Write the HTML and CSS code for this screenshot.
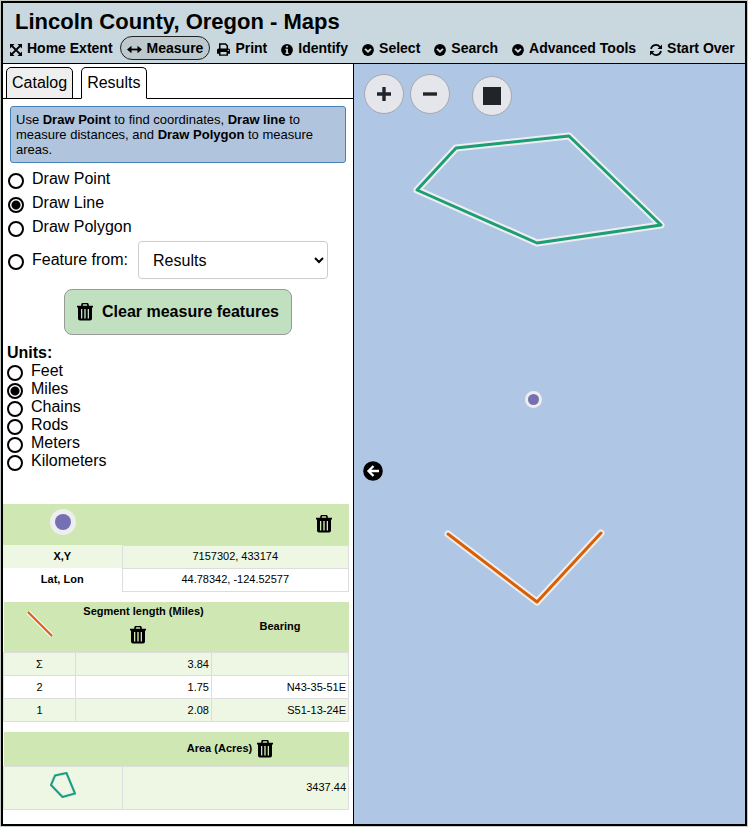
FILE: index.html
```html
<!DOCTYPE html>
<html lang="en">
<head>
<meta charset="utf-8">
<title>Lincoln County, Oregon - Maps</title>
<link rel="stylesheet" href="styles.css">
</head>
<body>
<svg class="sprite" aria-hidden="true">
  <symbol id="trash" viewBox="0 0 16 18">
    <path d="M5 3V2a1.5 1.5 0 0 1 1.5-1.5h3A1.5 1.5 0 0 1 11 2v1" fill="none" stroke="currentColor" stroke-width="1.6"/>
    <path fill="currentColor" fill-rule="evenodd" d="M0 2.8h16v1.800h-1V15.500a2 2 0 0 1-2 2H3a2 2 0 0 1-2-2V4.600H0zM4 6v9.500h1.300V6zM7.300 6v9.500h1.400V6zM10.700 6v9.500H12V6z"/>
  </symbol>
  <symbol id="down" viewBox="0 0 13 13">
    <circle cx="6.500" cy="6.500" r="6.400" fill="currentColor"/>
    <path d="M3.300 5.200l3.200 3.200 3.200-3.200" fill="none" stroke="#c9d7de" stroke-width="2"/>
  </symbol>
</svg>
<div class="frame">
  <header class="header">
    <h1 class="title">Lincoln County, Oregon - Maps</h1>
    <nav class="menu">
      <button class="menu-item" type="button"><svg class="menu-icon" viewBox="0 0 13 13"><path d="M2 2l9 9M11 2l-9 9" stroke="currentColor" stroke-width="2.200"/><path fill="currentColor" d="M0 0h5L0 5zM13 0v5L8 0zM0 13V8l5 5zM13 13H8l5-5z"/></svg>Home Extent</button>
      <button class="menu-item active" type="button"><svg class="menu-icon wide" viewBox="0 0 15 13"><path d="M2 6.500h11" stroke="currentColor" stroke-width="1.800"/><path fill="currentColor" d="M0 6.500l4.500-3.700v7.400zM15 6.500l-4.500-3.700v7.400z"/></svg>Measure</button>
      <button class="menu-item" type="button"><svg class="menu-icon print" viewBox="0 0 13 13"><path d="M2.800 6.500V1h5.700l1.800 1.800v3.700" fill="none" stroke="currentColor" stroke-width="1.500"/><path fill="currentColor" fill-rule="evenodd" d="M1.500 5.600h10A1.500 1.500 0 0 1 13 7.100v3.700h-2v2H2v-2H0V7.100a1.500 1.500 0 0 1 1.500-1.500zM3.500 9v2.400h6V9zM10.600 6.800v1.200h1.200V6.800z"/></svg>Print</button>
      <button class="menu-item" type="button"><svg class="menu-icon" viewBox="0 0 13 13"><circle cx="6.500" cy="6.500" r="6.400" fill="currentColor"/><path d="M5.500 2h2v1.900h-2zM4.800 5.100h2.700v4.300h.8v1.300H4.800V9.400h.8v-3h-.8z" fill="#c9d7de"/></svg>Identify</button>
      <button class="menu-item" type="button"><svg class="menu-icon"><use href="#down"/></svg>Select</button>
      <button class="menu-item" type="button"><svg class="menu-icon"><use href="#down"/></svg>Search</button>
      <button class="menu-item" type="button"><svg class="menu-icon"><use href="#down"/></svg>Advanced Tools</button>
      <button class="menu-item" type="button"><svg class="menu-icon" viewBox="0 0 13 13"><path d="M1.100 5.400A5.400 5.400 0 0 1 10.700 3.200M11.900 7.600A5.400 5.400 0 0 1 2.300 9.800" fill="none" stroke="currentColor" stroke-width="1.800"/><path fill="currentColor" d="M13 .6v4.800H8.200zM0 12.400V7.600h4.800z"/></svg>Start Over</button>
    </nav>
  </header>
  <main class="main">
    <section class="panel">
      <div class="tabs" role="tablist">
        <button class="tab" type="button" role="tab" aria-selected="false">Catalog</button>
        <button class="tab selected" type="button" role="tab" aria-selected="true">Results</button>
      </div>
      <p class="hint">Use <b>Draw Point</b> to find coordinates, <b>Draw line</b> to measure distances, and <b>Draw Polygon</b> to measure areas.</p>
      <form class="measure">
        <div class="modes">
          <label class="choice"><input type="radio" name="mode">Draw Point</label>
          <label class="choice"><input type="radio" name="mode" checked>Draw Line</label>
          <label class="choice"><input type="radio" name="mode">Draw Polygon</label>
        </div>
        <div class="feature">
          <label class="choice"><input type="radio" name="mode">Feature from:</label>
          <select class="source" aria-label="Feature from"><option>Results</option></select>
        </div>
        <button class="clear" type="button"><svg class="trash"><use href="#trash"/></svg>Clear measure features</button>
        <fieldset class="units">
          <legend>Units:</legend>
          <label class="choice"><input type="radio" name="unit">Feet</label>
          <label class="choice"><input type="radio" name="unit" checked>Miles</label>
          <label class="choice"><input type="radio" name="unit">Chains</label>
          <label class="choice"><input type="radio" name="unit">Rods</label>
          <label class="choice"><input type="radio" name="unit">Meters</label>
          <label class="choice"><input type="radio" name="unit">Kilometers</label>
        </fieldset>
      </form>
      <div class="results">
        <table class="result point">
          <colgroup><col class="col-wide"><col></colgroup>
          <thead><tr>
            <th><svg class="swatch" viewBox="0 0 26 26"><circle cx="13" cy="13" r="13" fill="#eee"/><circle cx="13" cy="13" r="8" fill="#7570b3"/></svg></th>
            <th class="end"><button class="delete" type="button" aria-label="Delete point"><svg class="trash"><use href="#trash"/></svg></button></th>
          </tr></thead>
          <tbody>
            <tr><th>X,Y</th><td>7157302, 433174</td></tr>
            <tr><th>Lat, Lon</th><td>44.78342, -124.52577</td></tr>
          </tbody>
        </table>
        <table class="result line">
          <colgroup><col class="col-narrow"><col class="col-mid"><col></colgroup>
          <thead><tr>
            <th><svg class="swatch" viewBox="0 0 26 26"><path d="M1 1l24 24" stroke="#eee" stroke-width="5"/><path d="M1 1l24 24" stroke="#d95f02" stroke-width="2"/></svg></th>
            <th><div class="stack">Segment length (Miles)<button class="delete" type="button" aria-label="Delete line"><svg class="trash"><use href="#trash"/></svg></button></div></th>
            <th>Bearing</th>
          </tr></thead>
          <tbody>
            <tr><td>Σ</td><td class="num">3.84</td><td class="num"></td></tr>
            <tr><td>2</td><td class="num">1.75</td><td class="num">N43-35-51E</td></tr>
            <tr><td>1</td><td class="num">2.08</td><td class="num">S51-13-24E</td></tr>
          </tbody>
        </table>
        <table class="result area">
          <colgroup><col class="col-wide"><col></colgroup>
          <thead><tr>
            <th></th>
            <th><div class="inline">Area (Acres)<button class="delete" type="button" aria-label="Delete area"><svg class="trash"><use href="#trash"/></svg></button></div></th>
          </tr></thead>
          <tbody>
            <tr><td><svg class="swatch" viewBox="0 0 26 26"><path d="M5 3.500L16.500 1 25 21.500 12.500 25 1 13z" fill="none" stroke="#e4eeee" stroke-width="4"/><path d="M5 3.500L16.500 1 25 21.500 12.500 25 1 13z" fill="none" stroke="#1b9e77" stroke-width="2"/></svg></td><td class="num">3437.44</td></tr>
          </tbody>
        </table>
      </div>
    </section>
    <section class="map" aria-label="Map">
      <svg class="drawing" aria-hidden="true">
        <g fill="none" stroke-linejoin="round" stroke-linecap="round">
          <path d="M102 84L215 72 307 161 183 179 63 126z" stroke="#eee" stroke-width="7"/>
          <path d="M102 84L215 72 307 161 183 179 63 126z" stroke="#1b9e77" stroke-width="3"/>
          <path d="M94 470L183 538 247 469" stroke="#eee" stroke-width="7"/>
          <path d="M94 470L183 538 247 469" stroke="#d95f02" stroke-width="3"/>
        </g>
        <circle cx="179.500" cy="335.500" r="8.500" fill="#eee"/>
        <circle cx="179.500" cy="335.500" r="5.500" fill="#7570b3"/>
      </svg>
      <div class="controls">
        <button class="round" type="button" aria-label="Zoom in"><svg viewBox="0 0 14 14"><path d="M0 7h14M7 0v14" stroke="#212529" stroke-width="3.400"/></svg></button>
        <button class="round" type="button" aria-label="Zoom out"><svg viewBox="0 0 14 14"><path d="M0 7h14" stroke="#212529" stroke-width="3.400"/></svg></button>
        <button class="round extent" type="button" aria-label="Base map"><span class="square"></span></button>
      </div>
      <button class="collapse" type="button" aria-label="Hide panel"><svg viewBox="0 0 20 20"><circle cx="10" cy="10" r="9.800" fill="#000"/><path d="M16 10H6M10.500 5L5.500 10l5 5" fill="none" stroke="#fff" stroke-width="2.300"/></svg></button>
    </section>
  </main>
</div>
</body>
</html>
```
FILE: styles.css
```css
* { box-sizing: border-box; }

body {
  margin: 0;
  padding: 1px;
  background: #c4cbc6;
  color: #000;
  font-family: "Liberation Sans", Arial, sans-serif;
  font-size: 16px;
}

button, select, input { font: inherit; color: inherit; margin: 0; }
button { padding: 0; border: 0; background: none; cursor: pointer; }
svg { display: block; flex: none; }

.sprite { position: absolute; width: 0; height: 0; }

.frame {
  display: flex;
  flex-direction: column;
  min-height: calc(100vh - 2px);
  border: 2px solid #000;
}

/* Header */
.header {
  background: #c9d7de;
  border-bottom: 1px solid #000;
  padding: 5px 0 3px;
}
.title { margin: 0; padding: 0 12px; font-size: 22px; line-height: 28px; }
.menu { display: flex; }
.menu-item {
  display: flex;
  align-items: center;
  gap: 5px;
  height: 24px;
  padding: 0 6px;
  border: 1px solid transparent;
  border-radius: 12px;
  font-size: 14px;
  font-weight: bold;
  white-space: nowrap;
}
.menu-item.active { background: #bdc9cd; border-color: #222; }
.menu-icon { width: 12px; height: 12px; margin-top: 3px; }
.menu-icon.wide { width: 15px; height: 13px; }
.menu-icon.print { width: 13px; height: 13px; }

/* Layout */
.main { display: flex; flex: 1; }
.panel {
  flex: 0 0 351px;
  background: #fff;
  border-right: 1px solid #000;
  padding: 3px 0 12px;
}
.map { position: relative; flex: 1; background: #b0c6e5; }

/* Tabs */
.tabs {
  display: flex;
  gap: 8px;
  padding: 0 3px;
  border-bottom: 1px solid #000;
}
.tab {
  height: 32px;
  margin-bottom: -1px;
  padding: 0 5px;
  border: 1px solid #000;
  border-radius: 5px 5px 0 0;
  background: #efefef;
}
.tab.selected { background: #fff; border-bottom-color: #fff; }

.hint {
  margin: 7px 7px 4px;
  padding: 5px;
  border: 1px solid #4682b4;
  border-radius: 3px;
  background: #b0c4de;
  font-size: 13px;
  line-height: 15px;
}

/* Measure form */
.choice { display: flex; align-items: center; gap: 8px; }
.choice input {
  appearance: none;
  width: 16px;
  height: 16px;
  margin-top: 4px;
  border: 2px solid #000;
  border-radius: 50%;
  background: #fff;
}
.choice input:checked { background: radial-gradient(circle, #000 4px, #fff 5px); }

.modes { padding-left: 5px; }
.modes .choice { height: 24px; }
.feature { display: flex; align-items: center; gap: 10px; padding: 2px 0 0 5px; }
.source {
  width: 190px;
  height: 38px;
  padding: 0 0 0 10px;
  border: 1px solid #ccc;
  border-radius: 4px;
  background: #fff;
}
.clear {
  display: flex;
  align-items: center;
  gap: 9px;
  height: 46px;
  margin: 10px auto 9px;
  padding: 0 12px;
  border: 1px solid #999;
  border-radius: 8px;
  background: #c1e0bf;
  font-weight: bold;
}
.trash { width: 16px; height: 18px; }

.units { margin: 0; padding: 0 4px; border: 0; line-height: 18px; }
.units legend { padding: 0; font-weight: bold; }
.units .choice { height: 18px; }

/* Results */
.results { display: grid; gap: 10px; padding: 34px 4px 0 0; }
.result {
  width: 100%;
  border-collapse: collapse;
  table-layout: fixed;
  font-size: 11px;
  line-height: 13px;
  text-align: center;
}
.col-wide { width: 119px; }
.col-narrow { width: 72px; }
.col-mid { width: 136px; }
.result th, .result td { padding: 0 3px; }
.result td { border: 1px solid #ddd; }
.result thead { background: #cfe7b3; }
.result tbody tr { height: 23px; }
.result tbody tr:nth-child(odd) { background: #eef7e3; }
.result .num { text-align: right; padding-right: 2px; }
.point thead tr { height: 41px; }
.line thead tr { height: 51px; }
.area thead tr { height: 34px; }
.area tbody tr { height: 43px; }
.swatch { width: 26px; height: 26px; margin: 0 auto 5px; }
.delete { display: block; margin-right: 11px; }
.end .delete { margin-left: auto; margin-right: 14px; }
.stack { display: flex; flex-direction: column; align-items: center; gap: 8px; padding-bottom: 5px; }
.inline { display: flex; align-items: center; justify-content: center; gap: 5px; }

/* Map */
.drawing { position: absolute; inset: 0; width: 100%; height: 100%; }
.controls { position: absolute; top: 10px; left: 10px; display: flex; gap: 6px; }
.round {
  display: grid;
  place-items: center;
  width: 40px;
  height: 40px;
  border: 1px solid #a5a8ae;
  border-radius: 50%;
  background: #e5e6ec;
}
.round svg { width: 14px; height: 14px; }
.extent { margin: 2px 0 0 16px; }
.square { width: 18px; height: 18px; background: #212529; }
.collapse { position: absolute; top: calc(50% + 17px); left: 9px; }
.collapse svg { width: 20px; height: 20px; }
```
